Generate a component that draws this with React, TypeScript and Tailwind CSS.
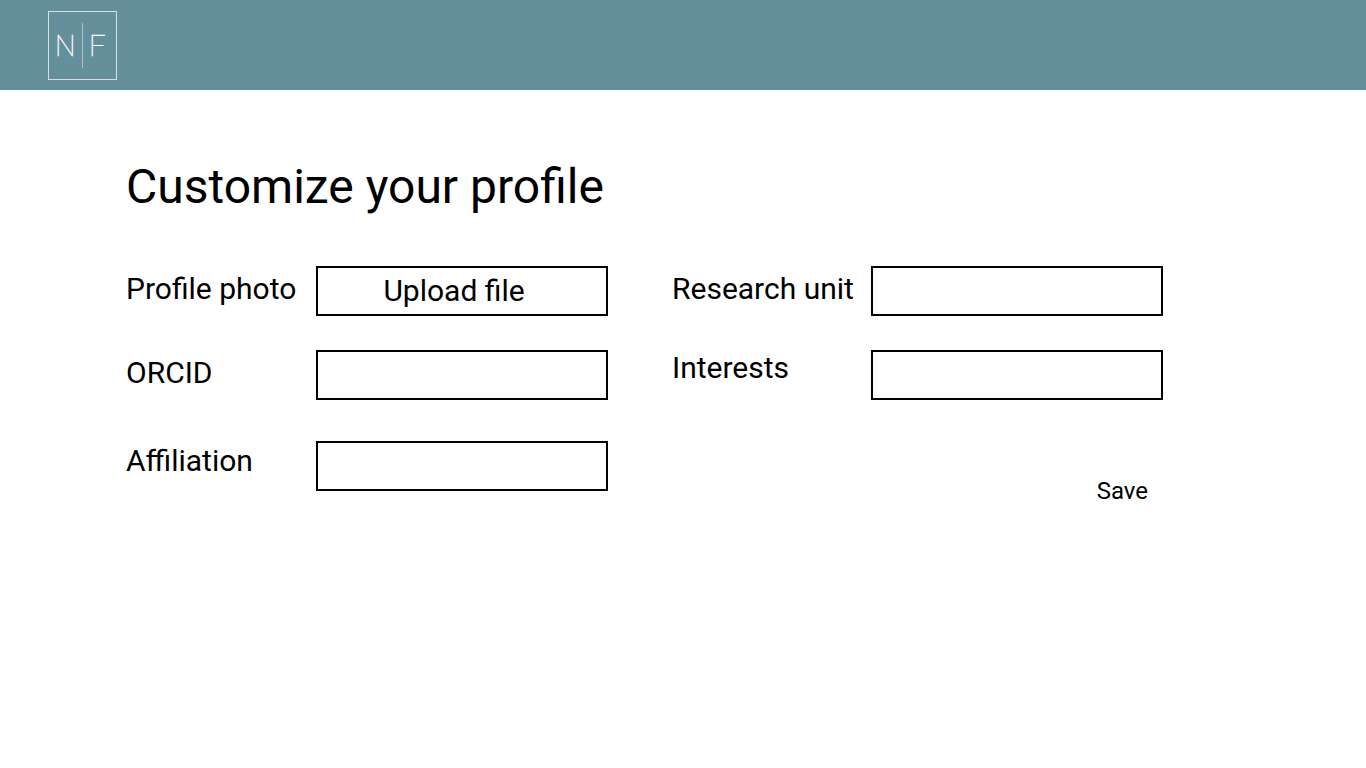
import { useRef } from "react";
import clsx from "clsx";

const boxClass =
  "h-[50px] w-full min-w-0 rounded-none border-2 border-black bg-[#fefefe] text-[30px] text-black";

function Logo() {
  return (
    <svg
      viewBox="0 0 70 70"
      className="h-[70px] w-[70px]"
      role="img"
      aria-label="N F"
      fill="none"
      stroke="#d3e0e4"
    >
      <rect x="0.5" y="1.5" width="68" height="68" />
      <path d="M34.5 13v45" stroke="#a9c2c9" />
      <g
        fill="#ffffff"
        stroke="#ffffff"
        strokeWidth="0.3"
        fontFamily="Roboto, sans-serif"
        fontWeight="100"
        fontSize="29"
      >
        <text x="7" y="46">N</text>
        <text x="41" y="46">F</text>
      </g>
    </svg>
  );
}

type FieldProps = {
  id: string;
  label: string;
  labelClass: string;
  columns: string;
};

function Field({ id, label, labelClass, columns }: FieldProps) {
  return (
    <div className={clsx("grid items-start", columns)}>
      <label htmlFor={id} className={clsx("whitespace-nowrap text-[30px]", labelClass)}>
        {label}
      </label>
      <input id={id} name={id} type="text" className={clsx(boxClass, "px-3")} />
    </div>
  );
}

const leftColumns = "grid-cols-[190px_minmax(0,1fr)]";
const rightColumns = "grid-cols-[199px_minmax(0,1fr)]";

export default function App() {
  const fileInput = useRef<HTMLInputElement>(null);

  return (
    <div className="min-h-screen bg-white font-['Roboto',sans-serif] text-black">
      <header className="flex h-[90px] items-center bg-[#668f9c] px-12">
        <a href="#home">
          <Logo />
        </a>
      </header>

      <main className="pt-[69px] pr-[203px] pl-[126px]">
        <h1 className="text-5xl leading-[56px]">Customize your profile</h1>

        <form
          className="mt-[51px] grid grid-cols-[minmax(0,482fr)_minmax(0,491fr)] gap-x-16"
          onSubmit={(event) => event.preventDefault()}
        >
          <div className="flex flex-col">
            <div className={clsx("grid items-start", leftColumns)}>
              <label htmlFor="photo" className="whitespace-nowrap text-[30px] leading-[46px]">
                Profile photo
              </label>
              <button
                type="button"
                className={clsx(boxClass, "pr-4 leading-[46px]")}
                onClick={() => fileInput.current?.click()}
              >
                Upload file
              </button>
              <input ref={fileInput} id="photo" name="photo" type="file" className="hidden" />
            </div>
            <div className="mt-[34px]">
              <Field id="orcid" label="ORCID" labelClass="leading-[46px]" columns={leftColumns} />
            </div>
            <div className="mt-[41px]">
              <Field id="affiliation" label="Affiliation" labelClass="leading-10" columns={leftColumns} />
            </div>
          </div>

          <div className="flex flex-col">
            <Field id="unit" label="Research unit" labelClass="leading-[46px]" columns={rightColumns} />
            <div className="mt-[34px]">
              <Field id="interests" label="Interests" labelClass="leading-9" columns={rightColumns} />
            </div>
            <button type="submit" className="mt-[75px] mr-[15px] self-end text-2xl leading-8">
              Save
            </button>
          </div>
        </form>
      </main>
    </div>
  );
}
